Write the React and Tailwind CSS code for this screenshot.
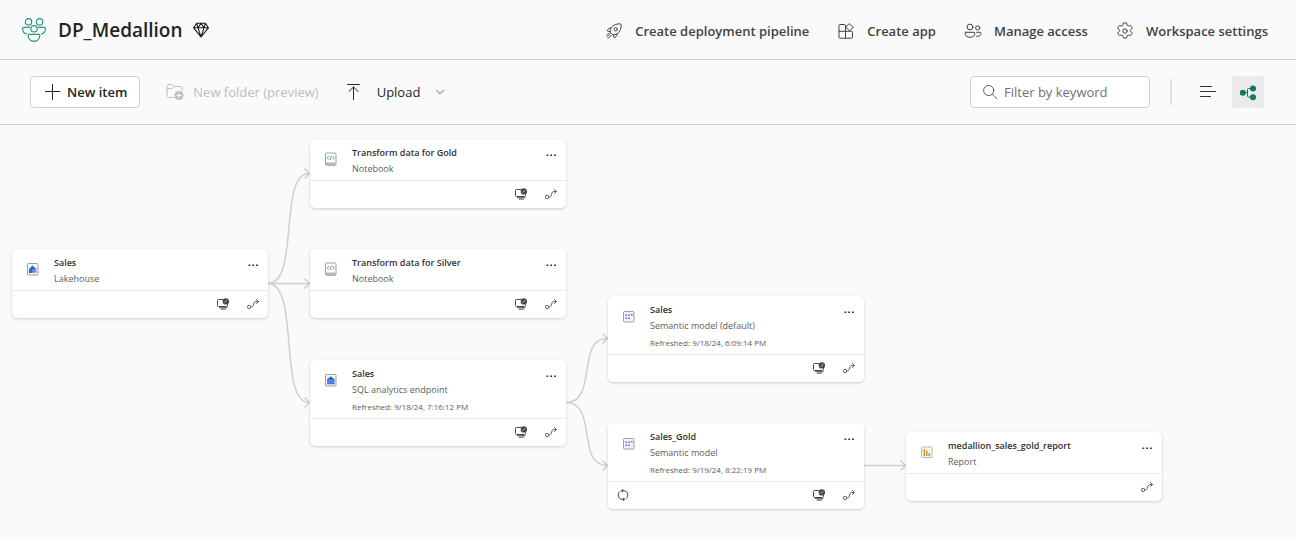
const FONT = "font-['Open_Sans','Noto_Sans',sans-serif]";

function Svg({ size, box, label, className = "", children }) {
  return (
    <svg
      width={size}
      height={size}
      viewBox={`0 0 ${box} ${box}`}
      fill="none"
      stroke="currentColor"
      strokeLinecap="round"
      strokeLinejoin="round"
      aria-hidden={label ? undefined : true}
      aria-label={label}
      className={`shrink-0 ${className}`}
    >
      {children}
    </svg>
  );
}

const CommunityIcon = () => (
  <Svg size={24} box={24} className="text-[#2b9482]">
    <g strokeWidth="1.2">
      <circle cx="6.5" cy="3.9" r="3.2" />
      <circle cx="17.6" cy="3.9" r="3.2" />
      <circle cx="12" cy="10.8" r="3.2" />
      <path d="M7.6 9.300H1.700c-.6 0-1 .4-1 1v.6c0 2.700 1.500 4.600 4.100 5.100" />
      <path d="M16.400 9.300h5.900c.6 0 1 .4 1 1v.6c0 2.700-1.500 4.600-4.100 5.100" />
      <path d="M7.200 16.300h9.600c.6 0 1 .4 1 1 0 3.500-2.300 6-5.800 6s-5.800-2.500-5.800-6c0-.6.4-1 1-1z" />
    </g>
  </Svg>
);

const DiamondIcon = () => (
  <Svg size={16} box={16} label="Premium" className="text-[#1b1a19]">
    <path
      strokeWidth="1.1"
      d="M3.600 1.200h8.800L15.400 5.800 8 14.800.6 5.800zM.6 5.800h14.800M5 5.800l3 9 3-9M3.600 1.200 5 5.800l3-4.600 3 4.600 1.400-4.600"
    />
  </Svg>
);

const RocketIcon = () => (
  <Svg size={16} box={16}>
    <path d="M4.200 8.900C3.900 4.600 7.700.8 13.900.8c.8 0 1.300.5 1.300 1.300 0 6.200-3.600 9.900-8 9.700z" />
    <path d="M5 5H3.600c-.4 0-.8.200-1 .6L1.300 7.900l2.900 1M11 10.900v1.500c0 .4-.2.800-.6 1l-2.300 1.300-.9-2.900" />
    <circle cx="9.700" cy="6.300" r="1.700" />
    <path d="M3.900 10.800.8 13.900M2.500 10.300l-1.300 1.300M5.200 12.300l-3 3" />
  </Svg>
);

const AppIcon = () => (
  <Svg size={16} box={16}>
    <path d="M7.500 15.200V2.500c0-.6-.4-1-1-1H2c-.6 0-1 .4-1 1v11.700c0 .6.400 1 1 1h11.500c.6 0 1-.4 1-1V9.300c0-.6-.4-1-1-1H1" />
    <path d="M11.500.9 15.200 4.300l-3.500 3.600L8 4.400z" />
  </Svg>
);

const AccessIcon = () => (
  <Svg size={18} box={18}>
    <circle cx="6" cy="5" r="2.900" />
    <circle cx="13.700" cy="5.900" r="2.100" />
    <path d="M2 10.300h8c.5 0 .9.400.9.900 0 2.500-1.900 4.100-4.900 4.100s-4.900-1.600-4.900-4.100c0-.5.4-.9.900-.9z" />
    <path d="M12.700 10.300h3.400c.5 0 .9.400.9.900 0 2-1.300 3.100-3.500 3.100-.4 0-.9 0-1.200-.1" />
  </Svg>
);

const GearIcon = () => (
  <Svg size={18} box={18}>
    <circle cx="9" cy="9" r="2.200" />
    <path d="M7.400 1.100c1-.3 2.200-.3 3.200 0l.5 2.100c.2.600.8 1 1.400.8l2.100-.6c.8.800 1.300 1.700 1.600 2.800l-1.500 1.500c-.5.500-.5 1.200 0 1.600l1.500 1.500c-.3 1.100-.8 2-1.600 2.800l-2.100-.6c-.6-.2-1.200.2-1.400.8l-.5 2.100c-1 .3-2.200.3-3.200 0l-.5-2.100c-.2-.6-.8-1-1.400-.8l-2.100.6c-.8-.8-1.300-1.700-1.600-2.800l1.500-1.500c.5-.4.5-1.100 0-1.600L1.800 6.200c.3-1.100.8-2 1.600-2.800l2.100.6c.6.200 1.200-.2 1.400-.8z" />
  </Svg>
);

const PlusIcon = () => (
  <Svg size={16} box={16} className="text-[#242424]">
    <path d="M7.500.5v15M0 7.500h15" />
  </Svg>
);

const FolderAddIcon = () => (
  <Svg size={18} box={18}>
    <path d="M7.500 14.500H3c-1.100 0-2-.9-2-2v-9c0-1.100.9-2 2-2h2.700c.4 0 .8.200 1.100.5L8.500 3.500H14c1.100 0 2 .9 2 2v2M1 5.500h4.700c.4 0 .8-.2 1.100-.5l1.700-1.500" />
    <circle cx="13" cy="12.500" r="4.500" fill="currentColor" stroke="none" />
    <path d="M13 10.300v4.400M10.800 12.500h4.400" stroke="#fafafa" />
  </Svg>
);

const UploadIcon = () => (
  <Svg size={16} box={16} className="text-[#242424]">
    <path d="M2.500.5h12M8.500 15.500V3M4 7.500 8.500 3 13 7.500" />
  </Svg>
);

const ChevronIcon = () => (
  <Svg size={8} box={8} className="text-[#605e5c]">
    <path d="M.6 2.300 4 5.700l3.400-3.400" />
  </Svg>
);

const SearchIcon = () => (
  <Svg size={16} box={16} className="text-[#605e5c]">
    <circle cx="5.700" cy="6.500" r="5.100" />
    <path d="m9.500 10.300 4.400 4.400" />
  </Svg>
);

const ListIcon = () => (
  <Svg size={16} box={16} className="text-[#323130]">
    <path d="M.5 2.500h11M.5 7.500h15M.5 12.500h10" />
  </Svg>
);

const LineageIcon = () => (
  <Svg size={18} box={18} className="text-[#117865]">
    <g fill="currentColor" stroke="none">
      <circle cx="3.800" cy="9.800" r="3" />
      <circle cx="14" cy="5.500" r="3" />
      <circle cx="14" cy="14.300" r="3" />
    </g>
    <path d="M6 9.500h2.500M12 5.500H9.500c-.6 0-1 .4-1 1v6.500c0 .6.400 1 1 1H12" />
  </Svg>
);

const MoreIcon = () => (
  <Svg size={10} box={10} className="text-[#323130]">
    <path d="M.5 4.400h1.800V6H.5zM4.300 4.400h1.800V6H4.300zM8.100 4.400h1.800V6H8.100z" fill="currentColor" stroke="none" />
  </Svg>
);

const ImpactIcon = () => (
  <Svg size={12} box={12} className="text-[#484644]">
    <path d="M6 1.500H1.500c-.6 0-1 .4-1 1v5c0 .6.400 1 1 1h8c.6 0 1-.4 1-1V6.500" />
    <path d="M2.500 9.600h7.500M4.200 11.100h4.300" strokeWidth="1.200" stroke="#797775" />
    <circle cx="8.900" cy="3.400" r="3.200" fill="currentColor" stroke="none" />
    <path d="M7.600 4.300 10.200 2.400" stroke="#c8c6c4" strokeWidth=".8" />
  </Svg>
);

const PathIcon = () => (
  <Svg size={12} box={12} className="text-[#605e5c]">
    <circle cx="2.200" cy="9" r="1.700" />
    <path d="M5.300 8.800c1.800-.6.700-5.300 3.500-5.300h2.600M9.300 1.400l2.100 2.100-2.100 2.100" />
  </Svg>
);

const RefreshIcon = () => (
  <Svg size={12} box={12} className="text-[#484644]">
    <path d="M4.500 1.600h1.700c2.700 0 4.600 1.900 4.600 4.400 0 1.600-.8 3-2 3.700M7.500 10.400H5.800C3.100 10.400 1.200 8.500 1.200 6c0-1.600.8-3 2-3.700M5 .3l1.500 1.300L5 2.900M7 9.100l-1.500 1.300L7 11.700" />
  </Svg>
);

function KindIcon({ kind }) {
  return (
    <svg width="12" height="14" viewBox="0 0 12 14" fill="none" aria-hidden="true" className="shrink-0">
      {kind === "notebook" && (
        <>
          <rect x=".5" y="1" width="10.500" height="12.300" rx="1" fill="#fff" stroke="#a19f9d" />
          <path d="M1 10.500h9.500v2.500H1z" fill="#b9b7b5" />
          <path d="M3.900 4 2.200 5.800l1.700 1.800M7.700 4l1.700 1.800-1.700 1.800M6.400 3.700 5.200 7.900" stroke="#4f9f4f" strokeWidth=".9" />
        </>
      )}
      {(kind === "lakehouse" || kind === "sql") && (
        <rect x=".5" y="1.500" width="10.500" height="11.500" rx=".6" fill="#f7f7f7" stroke="#a19f9d" />
      )}
      {kind === "lakehouse" && (
        <>
          <path d="M5.500 3.400 9.300 6.900V11H2V6.900z" fill="#2b66c9" />
          <path d="M5.300 8.200h4.700M5.300 10.200h4.700" stroke="#d5e4ff" strokeWidth=".8" />
        </>
      )}
      {kind === "sql" && (
        <>
          <path d="M5.800 3.300 9.500 6.300v4.900H2.100V6.300z" fill="#2b66c9" />
          <path d="M2.100 7.600h7.400M2.100 9.500h7.400M4.500 6.300v4.900M7.100 6.300v4.900" stroke="#a9c6f5" strokeWidth=".4" />
        </>
      )}
      {kind === "model" && (
        <>
          <rect x=".5" y="2.500" width="10.500" height="10.500" rx="1" fill="#f6f4fa" stroke="#a19f9d" />
          <path d="M2.500 5.500h1.400v1.400H2.500zM5.300 5.500h1.400v1.400H5.300zM8.100 5h1.400v1.400H8.100zM2.500 8.500h1.400v1.400H2.500zM5.300 8.500h1.400v1.400H5.300z" fill="#5f4fae" />
        </>
      )}
      {kind === "report" && (
        <>
          <rect x=".5" y="2" width="10.500" height="10.500" rx="1" fill="#fbf6ee" stroke="#b9b7b5" />
          <path d="M2.500 4h1.500v7H2.500zM5 5.500h1.500V11H5zM7.500 8H9v3H7.500z" fill="#cf8f2e" />
        </>
      )}
    </svg>
  );
}

const NODES = [
  { place: "left-[310px] top-[14px]", kind: "notebook", name: "Transform data for Gold", type: "Notebook", impact: true },
  { place: "left-[12px] top-[124px]", kind: "lakehouse", name: "Sales", type: "Lakehouse", impact: true },
  { place: "left-[310px] top-[124px]", kind: "notebook", name: "Transform data for Silver", type: "Notebook", impact: true },
  { place: "left-[310px] top-[235px]", kind: "sql", name: "Sales", type: "SQL analytics endpoint", refreshed: "9/18/24, 7:16:12 PM", impact: true },
  { place: "left-[608px] top-[171px]", kind: "model", name: "Sales", type: "Semantic model (default)", refreshed: "9/18/24, 6:09:14 PM", impact: true },
  { place: "left-[608px] top-[298px]", kind: "model", name: "Sales_Gold", type: "Semantic model", refreshed: "9/19/24, 8:22:19 PM", impact: true, refresh: true },
  { place: "left-[906px] top-[307px]", kind: "report", name: "medallion_sales_gold_report", type: "Report" },
];

function NodeCard({ place, kind, name, type, refreshed, impact, refresh }) {
  return (
    <article className={`absolute w-64 rounded-[5px] bg-white shadow-[0_1px_3px_rgba(0,0,0,0.18)] ${place}`}>
      <div className="flex items-start border-b border-[#edebe9] pr-2.5 pl-[15px]">
        <div className="mt-[13px]">
          <KindIcon kind={kind} />
        </div>
        <div className="ml-[15px] flex-1 pt-1.5 pb-1">
          <h2 className="text-[9px] leading-4 font-semibold text-[#323130]">{name}</h2>
          <p className="text-[9px] leading-[15px] text-[#605e5c]">{type}</p>
          {refreshed && (
            <p className="mt-1 pb-px text-[8px] leading-3 font-medium text-[#605e5c]">Refreshed: {refreshed}</p>
          )}
        </div>
        <button type="button" aria-label={`More options for ${name}`} className="mt-[11px]">
          <MoreIcon />
        </button>
      </div>
      <div className="flex h-[27px] items-center gap-[18px] px-[9px] pb-0.5">
        {refresh && (
          <button type="button" aria-label="Refresh now">
            <RefreshIcon />
          </button>
        )}
        <span className="flex-1" />
        {impact && (
          <button type="button" aria-label="Show impact">
            <ImpactIcon />
          </button>
        )}
        <button type="button" aria-label="Show lineage">
          <PathIcon />
        </button>
      </div>
    </article>
  );
}

function Edges() {
  return (
    <svg width="1180" height="400" fill="none" stroke="#d2d0ce" strokeWidth="1.500" aria-hidden="true" className="absolute top-0 left-0">
      <path d="M268 158.500H309" />
      <path d="M268 158.500C300 158.500 278 48.500 309 48.500" />
      <path d="M268 158.500C300 158.500 278 277.500 309 277.500" />
      <path d="M566 277.500C598 277.500 576 213.500 607 213.500" />
      <path d="M566 277.500C598 277.500 576 340.500 607 340.500" />
      <path d="M864 340.500H905" />
      <path d="M304.500 43.500l5 5-5 5M304.500 153.500l5 5-5 5M304.500 272.500l5 5-5 5M602.500 208.500l5 5-5 5M602.500 335.500l5 5-5 5M900.500 335.500l5 5-5 5" />
    </svg>
  );
}

function HeaderAction({ icon, children }) {
  return (
    <button type="button" className="flex items-center gap-3 text-[13px] leading-5 font-semibold whitespace-nowrap text-[#424242]">
      <span className="flex w-[18px] justify-center">{icon}</span>
      {children}
    </button>
  );
}

export default function App() {
  return (
    <div className={`flex min-h-screen flex-col bg-[#fafafa] text-[#242424] ${FONT}`}>
      <header className="flex h-[60px] items-center justify-between border-b border-[#d1d1d1] pr-7 pl-[22px]">
        <div className="flex items-center">
          <CommunityIcon />
          <h1 className="mr-2.5 ml-3 text-[19px] leading-7 font-semibold">DP_Medallion</h1>
          <DiamondIcon />
        </div>
        <div className="flex items-center gap-7 pt-0.5">
          <HeaderAction icon={<RocketIcon />}>Create deployment pipeline</HeaderAction>
          <HeaderAction icon={<AppIcon />}>Create app</HeaderAction>
          <HeaderAction icon={<AccessIcon />}>Manage access</HeaderAction>
          <HeaderAction icon={<GearIcon />}>Workspace settings</HeaderAction>
        </div>
      </header>

      <div className="flex h-[65px] items-center justify-between border-b border-[#d1d1d1] pr-8 pl-[30px] text-[13px] leading-5">
        <div className="flex items-center">
          <button type="button" className="flex h-8 items-center gap-1.5 rounded border border-[#d1d1d1] bg-white px-3.5 pr-3 font-semibold">
            <PlusIcon />
            New item
          </button>
          <button type="button" disabled className="ml-[26px] flex items-center gap-[9px] text-[#bdbdbd]">
            <FolderAddIcon />
            New folder (preview)
          </button>
          <button type="button" className="ml-[26px] flex items-center gap-4">
            <UploadIcon />
            Upload
            <ChevronIcon />
          </button>
        </div>
        <div className="flex items-center">
          <label className="flex h-8 w-[180px] items-center gap-[5px] rounded border border-[#d1d1d1] bg-white px-3">
            <SearchIcon />
            <input
              type="text"
              aria-label="Filter by keyword"
              placeholder="Filter by keyword"
              className="w-full min-w-0 bg-transparent outline-none placeholder:text-[#707070]"
            />
          </label>
          <span className="ml-5 h-[26px] w-0.5 bg-[#e1dfdd]" />
          <button type="button" aria-label="List view" className="ml-5 flex size-8 items-center justify-center">
            <ListIcon />
          </button>
          <button type="button" aria-label="Lineage view" aria-pressed="true" className="ml-2 flex size-8 items-center justify-center rounded bg-[#ebebeb]">
            <LineageIcon />
          </button>
        </div>
      </div>

      <main className="relative min-h-[400px] flex-1 overflow-auto">
        <Edges />
        {NODES.map((node) => (
          <NodeCard key={node.place} {...node} />
        ))}
      </main>
    </div>
  );
}
